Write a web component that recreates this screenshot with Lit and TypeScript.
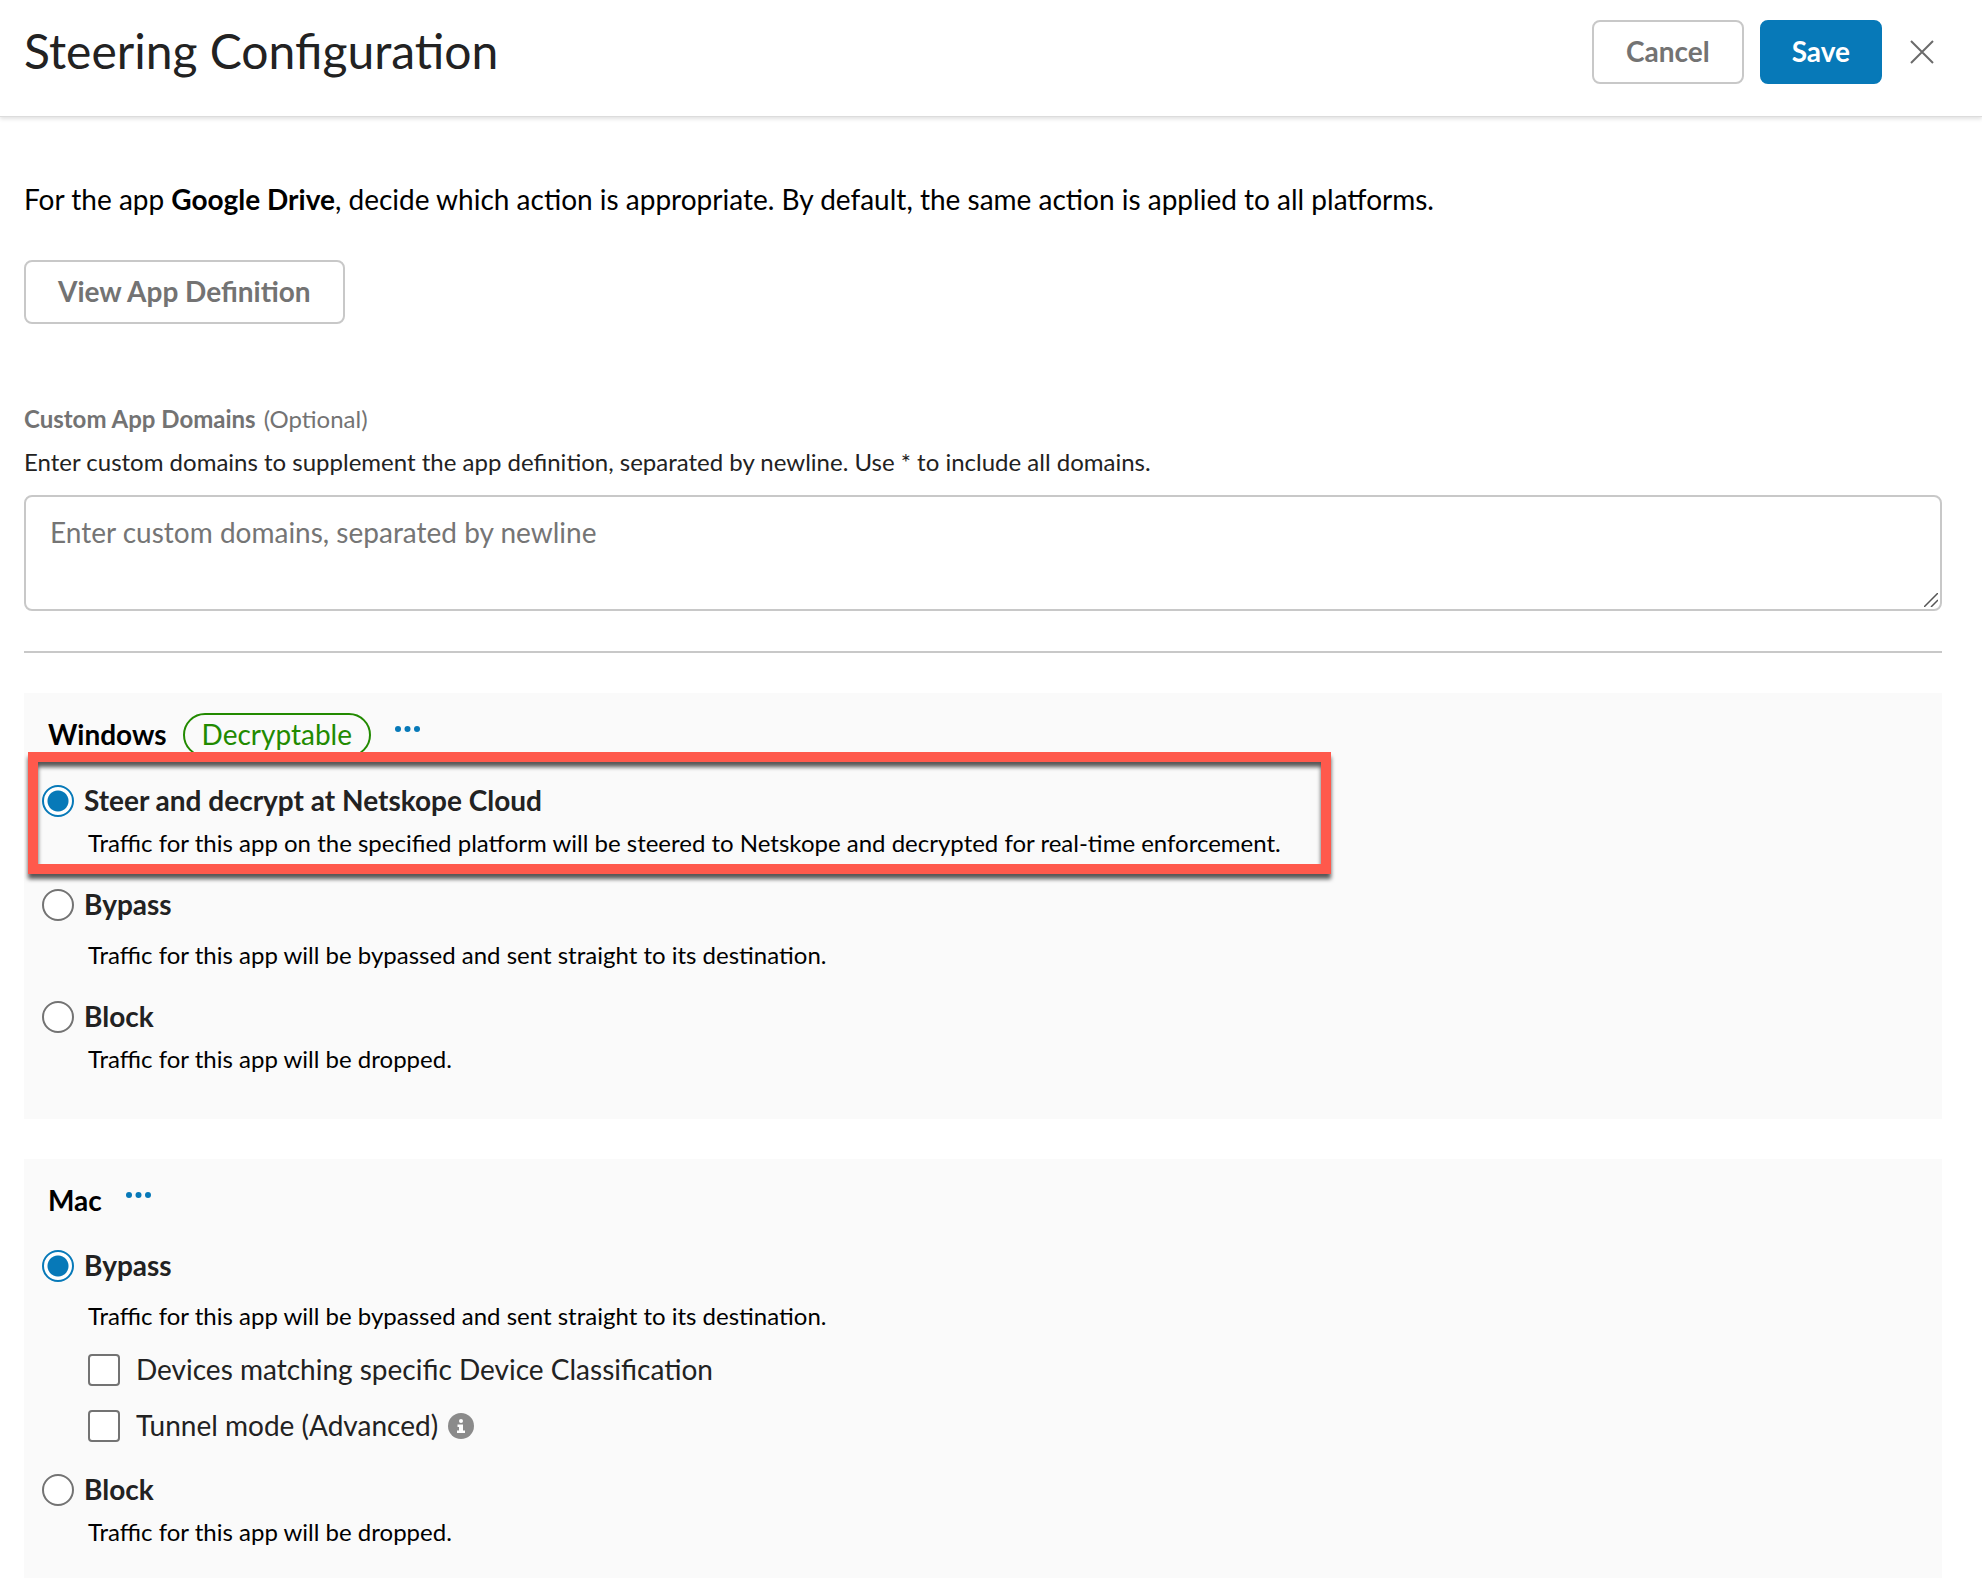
import { LitElement, html, css, nothing, type TemplateResult } from "lit";
import { customElement, property, state } from "lit/decorators.js";

interface Check {
  id: string;
  label: string;
  info?: boolean;
}

interface Option {
  id: string;
  label: string;
  description: string;
  loose?: boolean;
  highlighted?: boolean;
  checks?: Check[];
}

interface Platform {
  id: string;
  name: string;
  badge?: string;
  selected: string;
  options: Option[];
}

const BYPASS = "Traffic for this app will be bypassed and sent straight to its destination.";
const BLOCK = "Traffic for this app will be dropped.";

const PLATFORMS: Platform[] = [
  {
    id: "windows",
    name: "Windows",
    badge: "Decryptable",
    selected: "steer",
    options: [
      {
        id: "steer",
        label: "Steer and decrypt at Netskope Cloud",
        description:
          "Traffic for this app on the specified platform will be steered to Netskope and decrypted for real-time enforcement.",
        highlighted: true,
      },
      { id: "bypass", label: "Bypass", description: BYPASS, loose: true },
      { id: "block", label: "Block", description: BLOCK },
    ],
  },
  {
    id: "mac",
    name: "Mac",
    selected: "bypass",
    options: [
      {
        id: "bypass",
        label: "Bypass",
        description: BYPASS,
        loose: true,
        checks: [
          { id: "devices", label: "Devices matching specific Device Classification" },
          { id: "tunnel", label: "Tunnel mode (Advanced)", info: true },
        ],
      },
      { id: "block", label: "Block", description: BLOCK },
    ],
  },
];

@customElement("platform-panel")
export class PlatformPanel extends LitElement {
  @property({ attribute: false }) platform!: Platform;
  @state() private selected = "";

  static styles = css`
    :host {
      display: block;
      background: #fafafa;
      padding: 20px 18px 44px;
    }
    .heading {
      display: flex;
      align-items: flex-start;
      padding-left: 6px;
      margin-bottom: 28px;
    }
    h2 {
      margin: 0;
      padding-bottom: 1px;
      font-size: 28px;
      line-height: 42px;
      font-weight: 700;
      color: #000;
    }
    .badge {
      box-sizing: border-box;
      height: 44px;
      margin-left: 16px;
      padding: 0 17px;
      border: 2px solid #228a00;
      border-radius: 22px;
      color: #228a00;
      font-size: 28px;
      line-height: 38px;
    }
    .more {
      display: flex;
      margin-left: 24px;
      padding: 12px 0;
      border: 0;
      background: none;
      color: #0779b8;
      cursor: pointer;
    }
    .options {
      display: flex;
      flex-direction: column;
      align-items: flex-start;
      gap: 30px;
    }
    .option {
      position: relative;
      display: flex;
      flex-direction: column;
      gap: 12px;
    }
    .option.loose {
      gap: 20px;
    }
    .choice,
    .check {
      display: flex;
      align-items: flex-start;
      line-height: 30px;
      font-size: 28px;
      color: #222;
    }
    .choice {
      gap: 10px;
      font-weight: 700;
    }
    .check {
      gap: 16px;
    }
    input {
      appearance: none;
      box-sizing: border-box;
      flex: none;
      width: 32px;
      height: 32px;
      margin: 0;
      border: 2px solid #737373;
      background: #fff;
    }
    input[type="radio"] {
      border-radius: 50%;
    }
    input[type="radio"]:checked {
      border-color: #0779b8;
      background: radial-gradient(circle, #0779b8 10px, #fff 11px);
    }
    input[type="checkbox"] {
      border-radius: 4px;
    }
    input[type="checkbox"]:checked {
      background: #0779b8;
    }
    .description {
      margin: 0;
      padding: 0 0 2px 46px;
      font-size: 24px;
      line-height: 28px;
      color: #000;
    }
    .checks {
      display: flex;
      flex-direction: column;
      gap: 24px;
      padding: 2px 0 2px 46px;
    }
    .check-row {
      display: flex;
      align-items: center;
      gap: 10px;
    }
    .info {
      display: flex;
      padding: 0;
      border: 0;
      background: none;
    }
    .marker {
      position: absolute;
      inset: -33px -50px -15px -14px;
      border: 10px solid #ff594c;
      filter: drop-shadow(0 5px 2px rgba(0, 0, 0, 0.65));
      pointer-events: none;
    }
  `;

  willUpdate() {
    if (!this.selected) this.selected = this.platform.selected;
  }

  private renderCheck(check: Check): TemplateResult {
    const id = `${this.platform.id}-${check.id}`;
    return html`
      <div class="check-row">
        <label class="check" for=${id}><input type="checkbox" id=${id} />${check.label}</label>
        ${check.info
          ? html`<button class="info" type="button" aria-label="More information">
              <svg width="26" height="26" viewBox="0 0 26 26" aria-hidden="true">
                <circle cx="13" cy="13" r="13" fill="#8b8b8b" />
                <circle cx="13" cy="8" r="2" fill="#fff" />
                <path fill="#fff" d="M9.500 11.500h5.500v6h2v2.500h-8v-2.500h2v-3.500h-1.500z" />
              </svg>
            </button>`
          : nothing}
      </div>
    `;
  }

  private renderOption(option: Option): TemplateResult {
    const id = `${this.platform.id}-${option.id}`;
    return html`
      <div class="option ${option.loose ? "loose" : ""}">
        <label class="choice" for=${id}>
          <input
            type="radio"
            id=${id}
            name=${this.platform.id}
            aria-describedby="${id}-description"
            .checked=${this.selected === option.id}
            @change=${() => (this.selected = option.id)}
          />${option.label}
        </label>
        <p class="description" id="${id}-description">${option.description}</p>
        ${option.checks
          ? html`<div class="checks">${option.checks.map((c) => this.renderCheck(c))}</div>`
          : nothing}
        ${option.highlighted ? html`<div class="marker"></div>` : nothing}
      </div>
    `;
  }

  render() {
    const { name, badge, options } = this.platform;
    return html`
      <div class="heading">
        <h2>${name}</h2>
        ${badge ? html`<span class="badge">${badge}</span>` : nothing}
        <button class="more" type="button" aria-label="More options for ${name}">
          <svg width="26" height="8" viewBox="0 0 26 8" fill="currentColor" aria-hidden="true">
            <circle cx="3" cy="4" r="3" />
            <circle cx="12.500" cy="4" r="3" />
            <circle cx="22" cy="4" r="3" />
          </svg>
        </button>
      </div>
      <div class="options">${options.map((o) => this.renderOption(o))}</div>
    `;
  }
}

@customElement("app-root")
export class AppRoot extends LitElement {
  static styles = css`
    :host {
      display: block;
      min-height: 100vh;
      background: #fff;
      font-family: Lato, "Liberation Sans", sans-serif;
      color: #222;
    }
    header {
      display: flex;
      align-items: center;
      gap: 16px;
      padding: 20px 48px 32px 24px;
      border-bottom: 1px solid #dcdcdc;
      box-shadow: 0 2px 4px rgba(0, 0, 0, 0.12);
    }
    h1 {
      flex: 1;
      align-self: flex-start;
      margin: 0;
      font-size: 48px;
      line-height: 62px;
      font-weight: 400;
    }
    .button {
      box-sizing: border-box;
      height: 64px;
      padding: 0 32px 2px;
      border: 2px solid #c8c8c8;
      border-radius: 8px;
      background: #fff;
      color: #737373;
      font: 700 28px/32px Lato, "Liberation Sans", sans-serif;
      cursor: pointer;
    }
    .button.primary {
      padding: 0 30px 2px;
      border-color: #0779b8;
      background: #0779b8;
      color: #fff;
    }
    .close {
      display: flex;
      padding: 0;
      margin-left: 12px;
      border: 0;
      background: none;
      color: #6b6b6b;
      cursor: pointer;
    }
    main {
      padding: 63px 40px 0 24px;
    }
    .intro {
      margin: 0 0 42px;
      font-size: 28px;
      line-height: 38px;
      color: #000;
    }
    .field {
      margin-top: 80px;
    }
    .label {
      display: flex;
      gap: 8px;
      font-size: 24px;
      line-height: 30px;
      color: #737373;
    }
    .label label {
      font-weight: 700;
    }
    .hint {
      margin: 13px 0 18px;
      font-size: 24px;
      line-height: 30px;
    }
    .area {
      position: relative;
      display: flex;
    }
    textarea {
      box-sizing: border-box;
      width: 100%;
      height: 116px;
      padding: 16px 24px;
      border: 2px solid #c8c8c8;
      border-radius: 8px;
      font: 400 28px/38px Lato, "Liberation Sans", sans-serif;
      color: #222;
      resize: vertical;
    }
    textarea::placeholder {
      color: #757575;
      opacity: 1;
    }
    textarea::-webkit-resizer {
      display: none;
    }
    .grip {
      position: absolute;
      right: 4px;
      bottom: 4px;
      pointer-events: none;
    }
    hr {
      margin: 40px 0;
      border: 0;
      border-top: 2px solid #c8c8c8;
    }
    .platforms {
      display: flex;
      flex-direction: column;
      gap: 40px;
    }
  `;

  render() {
    return html`
      <header>
        <h1>Steering Configuration</h1>
        <button class="button" type="button">Cancel</button>
        <button class="button primary" type="button">Save</button>
        <button class="close" type="button" aria-label="Close">
          <svg width="24" height="24" viewBox="0 0 24 24" fill="none" stroke="currentColor" stroke-width="2" aria-hidden="true">
            <path d="M1 1l22 22M23 1L1 23" />
          </svg>
        </button>
      </header>
      <main>
        <p class="intro">
          For the app <strong>Google Drive</strong>, decide which action is appropriate. By default, the same action is
          applied to all platforms.
        </p>
        <button class="button" type="button">View App Definition</button>
        <div class="field">
          <div class="label"><label for="domains">Custom App Domains</label><span>(Optional)</span></div>
          <p class="hint" id="domains-hint">
            Enter custom domains to supplement the app definition, separated by newline. Use * to include all domains.
          </p>
          <div class="area">
            <textarea
              id="domains"
              aria-describedby="domains-hint"
              placeholder="Enter custom domains, separated by newline"
            ></textarea>
            <svg class="grip" width="14" height="14" viewBox="0 0 14 14" stroke="#555" stroke-width="1.500" aria-hidden="true">
              <path d="M0 14L14 0M7 14L14 7" />
            </svg>
          </div>
        </div>
        <hr />
        <div class="platforms">
          ${PLATFORMS.map((p) => html`<platform-panel .platform=${p}></platform-panel>`)}
        </div>
      </main>
    `;
  }
}
